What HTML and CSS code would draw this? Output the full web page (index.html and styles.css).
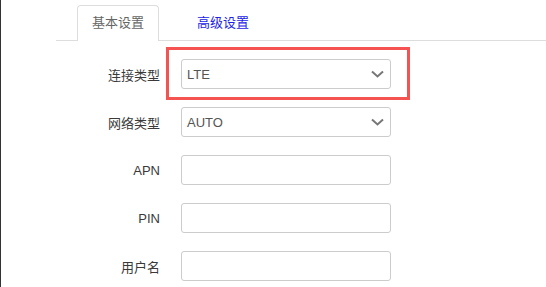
FILE: index.html
```html
<!DOCTYPE html>
<html lang="zh-CN">
<head>
    <meta charset="UTF-8">
    <meta name="viewport" content="width=device-width, initial-scale=1.0">
    <title>移动网络设置</title>
    <link rel="stylesheet" href="styles.css">
</head>
<body>
    <div class="page">
        <div class="tabs">
            <a class="tab active" href="#">基本设置</a>
            <a class="tab" href="#">高级设置</a>
        </div>

        <div class="form">
            <div class="row">
                <label class="label">连接类型</label>
                <div class="select highlight">
                    <span>LTE</span>
                    <svg class="chevron" width="13" height="8" viewBox="0 0 13 8"><polyline points="1,1.5 6.5,6.5 12,1.5" fill="none" stroke="#777" stroke-width="2"/></svg>
                </div>
            </div>
            <div class="row">
                <label class="label">网络类型</label>
                <div class="select">
                    <span>AUTO</span>
                    <svg class="chevron" width="13" height="8" viewBox="0 0 13 8"><polyline points="1,1.5 6.5,6.5 12,1.5" fill="none" stroke="#777" stroke-width="2"/></svg>
                </div>
            </div>
            <div class="row">
                <label class="label">APN</label>
                <input class="input" type="text">
            </div>
            <div class="row">
                <label class="label">PIN</label>
                <input class="input" type="text">
            </div>
            <div class="row">
                <label class="label">用户名</label>
                <input class="input" type="text">
            </div>
        </div>
    </div>
</body>
</html>
```

FILE: styles.css
```css
body {
    margin: 0;
    font-family: "Liberation Sans", "Noto Sans CJK SC", sans-serif;
    font-size: 13px;
    background: #fff;
    color: #333;
}

.page {
    height: 287px;
    border-left: 1px solid #333;
    overflow: hidden;
}

.tabs {
    display: flex;
    margin: 5px 0 0 55px;
    padding-left: 21px;
    border-bottom: 1px solid #ddd;
}

.tab {
    display: block;
    height: 34px;
    line-height: 34px;
    padding: 0 14px;
    color: #2323e6;
    text-decoration: none;
    border: 1px solid transparent;
    border-bottom: none;
    border-radius: 4px 4px 0 0;
    margin-bottom: -1px;
    margin-right: 23px;
}

.tab.active {
    color: #666;
    background: #fff;
    border-color: #ddd;
    height: 35px;
}

.form {
    padding-top: 18px;
}

.row {
    display: flex;
    align-items: center;
    height: 30px;
    margin-bottom: 18px;
}

.label {
    width: 159px;
    text-align: right;
    margin-right: 21px;
    color: #3a3a3a;
}

.select,
.input {
    box-sizing: border-box;
    width: 210px;
    height: 30px;
    border: 1px solid #ccc;
    border-radius: 3px;
    background: #fff;
}

.select {
    display: flex;
    align-items: center;
    justify-content: space-between;
    padding: 0 5px 0 5px;
    color: #555;
}

.chevron {
    margin-right: 1px;
}

.input {
    margin: 0;
    padding: 0 5px;
    font: inherit;
}

.highlight {
    position: relative;
}

.highlight::after {
    content: "";
    position: absolute;
    left: -16px;
    top: -13px;
    right: -20px;
    bottom: -12px;
    border: 3px solid #f55252;
}
```
